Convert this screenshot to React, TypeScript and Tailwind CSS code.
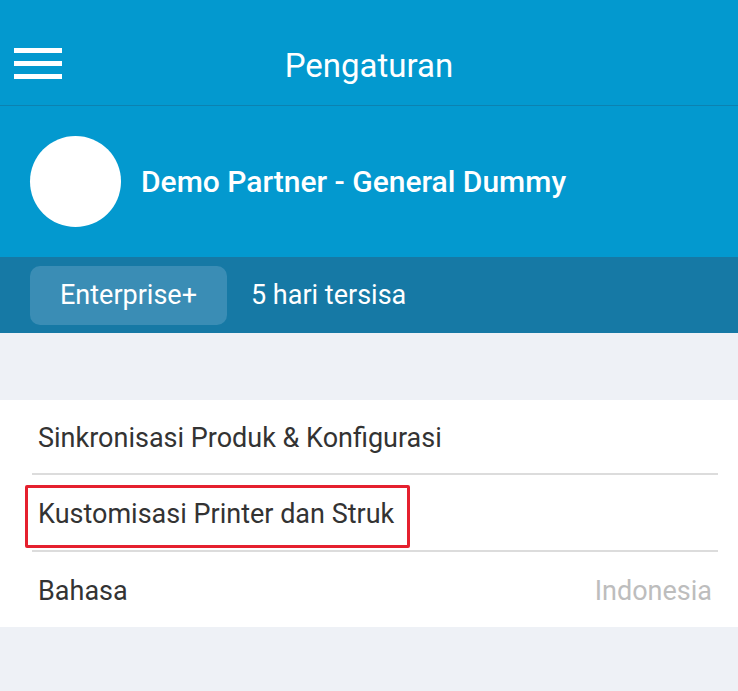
export default function App() {
  const font = { fontFamily: "Roboto, 'Noto Sans', sans-serif" };
  return (
    <div className="w-[738px] h-[691px] bg-[#eef1f6] overflow-hidden" style={font}>
      {/* top bar */}
      <div className="h-[106px] bg-[#0399cf] relative flex items-center justify-center border-b border-[#0c82b1]">
        <div className="absolute left-[14px] top-[48px] flex flex-col gap-[8px]">
          <div className="w-[48px] h-[5px] bg-white" />
          <div className="w-[48px] h-[5px] bg-white" />
          <div className="w-[48px] h-[5px] bg-white" />
        </div>
        <span className="text-white text-[33px] mt-[26px]">Pengaturan</span>
      </div>

      {/* profile */}
      <div className="h-[151px] bg-[#0399cf] flex items-center pl-[30px] gap-[20px]">
        <div className="w-[91px] h-[91px] rounded-full bg-white" />
        <span className="text-white text-[30px] font-medium">Demo Partner - General Dummy</span>
      </div>

      {/* plan */}
      <div className="h-[76px] bg-[#1679a5] flex items-center pl-[30px] gap-[24px]">
        <div className="h-[59px] w-[197px] rounded-[10px] bg-[#3a8db5] flex items-center justify-center">
          <span className="text-white text-[27px]">Enterprise+</span>
        </div>
        <span className="text-white text-[27px]">5 hari tersisa</span>
      </div>

      <div className="h-[67px]" />

      {/* list */}
      <div className="bg-white pl-[32px] pr-[20px]">
        <div className="h-[75px] flex items-center border-b-2 border-[#dcdcdc] pl-[6px] pt-[4px]">
          <span className="text-[27px] text-[#333]">Sinkronisasi Produk &amp; Konfigurasi</span>
        </div>
        <div className="h-[77px] flex items-center border-b-2 border-[#dcdcdc] relative pl-[6px] pt-[4px]">
          <div className="absolute left-[-7px] top-[10px] w-[385px] h-[63px] border-[3px] border-[#e5202e] rounded-[2px]" />
          <span className="text-[27px] text-[#333]">Kustomisasi Printer dan Struk</span>
        </div>
        <div className="h-[75px] flex items-center justify-between pl-[6px] pr-[6px] pt-[4px]">
          <span className="text-[27px] text-[#333]">Bahasa</span>
          <span className="text-[27px] text-[#bdbdbd]">Indonesia</span>
        </div>
      </div>
    </div>
  );
}
